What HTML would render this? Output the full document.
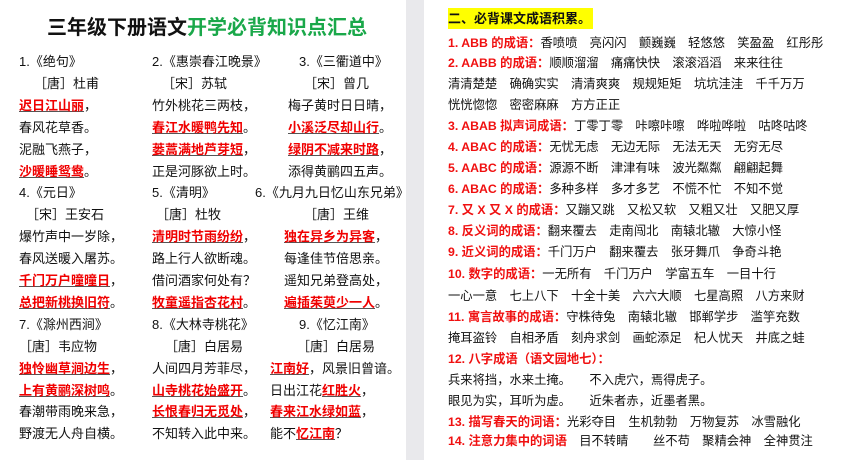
<!DOCTYPE html>
<html><head><meta charset="utf-8"><style>
*{margin:0;padding:0}
html,body{width:845px;height:441px}
body{background:#e9e9ec;position:relative;overflow:hidden;font-family:"Liberation Sans","Noto Sans CJK SC",sans-serif;font-size:13px;color:#111}
.pg{position:absolute;top:0;height:460px;background:#fff}
.l{position:absolute;white-space:pre;line-height:16px}
.r{color:#f00000;text-decoration:underline;text-decoration-color:#555;font-weight:bold}
.h{color:#f01010;font-weight:bold}
</style></head><body>
<div class="pg" style="left:0;width:406px"></div>
<div class="pg" style="left:424px;width:421px"></div>
<div class="l" style="left:47px;top:16px;font-size:20px;line-height:24px;font-weight:bold">三年级下册语文<span style="color:#1aa84a">开学必背知识点汇总</span></div>
<div id="left"></div>
<div class="l" style="left:448px;top:8px;background:#ffff00;font-weight:bold;padding:3px 2px 2px 0;height:16px">二、必背课文成语积累。</div>
<script>
var L=[
[[19,'1.《绝句》'],[152,'2.《惠崇春江晚景》'],[299,'3.《三衢道中》']],
[[34,'［唐］杜甫'],[162,'［宋］苏轼'],[304,'［宋］曾几']],
[[19,'<span class=r>迟日江山丽</span>，'],[152,'竹外桃花三两枝，'],[288,'梅子黄时日日晴，']],
[[19,'春风花草香。'],[152,'<span class=r>春江水暖鸭先知</span>。'],[288,'<span class=r>小溪泛尽却山行</span>。']],
[[19,'泥融飞燕子，'],[152,'<span class=r>蒌蒿满地芦芽短</span>，'],[288,'<span class=r>绿阴不减来时路</span>，']],
[[19,'<span class=r>沙暖睡鸳鸯</span>。'],[152,'正是河豚欲上时。'],[288,'添得黄鹂四五声。']],
[[19,'4.《元日》'],[152,'5.《清明》'],[255,'6.《九月九日忆山东兄弟》']],
[[26,'［宋］王安石'],[156,'［唐］杜牧'],[304,'［唐］王维']],
[[19,'爆竹声中一岁除，'],[152,'<span class=r>清明时节雨纷纷</span>，'],[284,'<span class=r>独在异乡为异客</span>，']],
[[19,'春风送暖入屠苏。'],[152,'路上行人欲断魂。'],[284,'每逢佳节倍思亲。']],
[[19,'<span class=r>千门万户曈曈日</span>，'],[152,'借问酒家何处有？'],[284,'遥知兄弟登高处，']],
[[19,'<span class=r>总把新桃换旧符</span>。'],[152,'<span class=r>牧童遥指杏花村</span>。'],[284,'<span class=r>遍插茱萸少一人</span>。']],
[[19,'7.《滁州西涧》'],[152,'8.《大林寺桃花》'],[299,'9.《忆江南》']],
[[19,'［唐］韦应物'],[165,'［唐］白居易'],[297,'［唐］白居易']],
[[19,'<span class=r>独怜幽草涧边生</span>，'],[152,'人间四月芳菲尽，'],[270,'<span class=r>江南好</span>，风景旧曾谙。']],
[[19,'<span class=r>上有黄鹂深树鸣</span>。'],[152,'<span class=r>山寺桃花始盛开</span>。'],[270,'日出江花<span class=r>红胜火</span>，']],
[[19,'春潮带雨晚来急，'],[152,'<span class=r>长恨春归无觅处</span>，'],[270,'<span class=r>春来江水绿如蓝</span>，']],
[[19,'野渡无人舟自横。'],[152,'不知转入此中来。'],[270,'能不<span class=r>忆江南</span>？']]];
var h='';
L.forEach(function(row,i){row.forEach(function(c){h+='<div class="l" style="left:'+c[0]+'px;top:'+(54+i*21.9)+'px">'+c[1]+'</div>';});});
var R=[
[43,'<span class=h>1. ABB 的成语：</span>香喷喷　亮闪闪　颤巍巍　轻悠悠　笑盈盈　红彤彤'],
[63,'<span class=h>2. AABB 的成语：</span>顺顺溜溜　痛痛快快　滚滚滔滔　来来往往'],
[84,'清清楚楚　确确实实　清清爽爽　规规矩矩　坑坑洼洼　千千万万'],
[105,'恍恍惚惚　密密麻麻　方方正正'],
[126,'<span class=h>3. ABAB 拟声词成语：</span>丁零丁零　咔嚓咔嚓　哗啦哗啦　咕咚咕咚'],
[147,'<span class=h>4. ABAC 的成语：</span>无忧无虑　无边无际　无法无天　无穷无尽'],
[168,'<span class=h>5. AABC 的成语：</span>源源不断　津津有味　波光粼粼　翩翩起舞'],
[189,'<span class=h>6. ABAC 的成语：</span>多种多样　多才多艺　不慌不忙　不知不觉'],
[210,'<span class=h>7. 又 X 又 X 的成语：</span>又蹦又跳　又松又软　又粗又壮　又肥又厚'],
[231,'<span class=h>8. 反义词的成语：</span>翻来覆去　走南闯北　南辕北辙　大惊小怪'],
[252,'<span class=h>9. 近义词的成语：</span>千门万户　翻来覆去　张牙舞爪　争奇斗艳'],
[274,'<span class=h>10. 数字的成语：</span>一无所有　千门万户　学富五车　一目十行'],
[296,'一心一意　七上八下　十全十美　六六大顺　七星高照　八方来财'],
[317,'<span class=h>11. 寓言故事的成语：</span>守株待兔　南辕北辙　邯郸学步　滥竽充数'],
[338,'掩耳盗铃　自相矛盾　刻舟求剑　画蛇添足　杞人忧天　井底之蛙'],
[359,'<span class=h>12. 八字成语（语文园地七）：</span>'],
[380,'兵来将挡，水来土掩。　　不入虎穴，焉得虎子。'],
[401,'眼见为实，耳听为虚。　　近朱者赤，近墨者黑。'],
[422,'<span class=h>13. 描写春天的词语：</span>光彩夺目　生机勃勃　万物复苏　冰雪融化'],
[441,'<span class=h>14. 注意力集中的词语</span>　目不转睛　　丝不苟　聚精会神　全神贯注']];
R.forEach(function(r){h+='<div class="l" style="left:448px;top:'+(r[0]-8)+'px;font-size:12.3px">'+r[1]+'</div>';});
document.getElementById('left').innerHTML=h;
</script>
</body></html>
